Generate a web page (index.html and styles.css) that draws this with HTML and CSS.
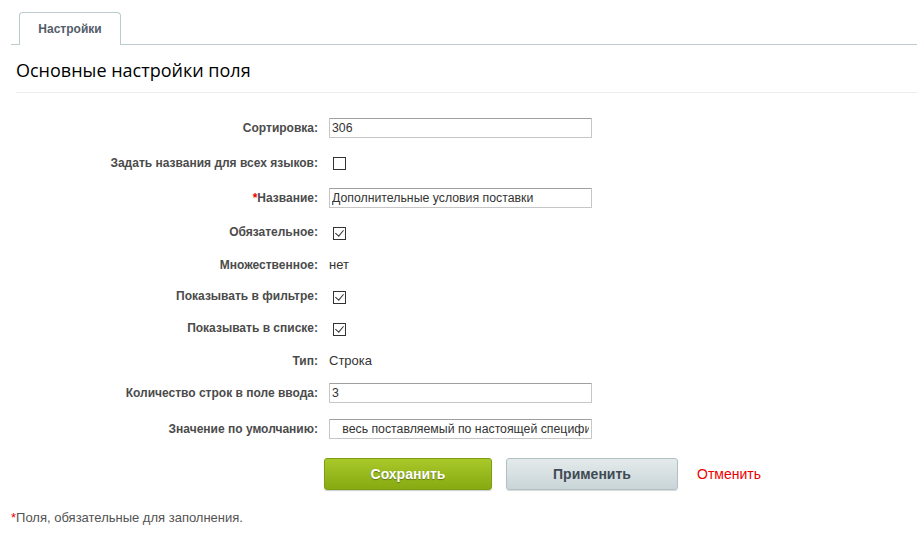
FILE: index.html
```html
<!DOCTYPE html>
<html lang="ru">
<head>
    <meta charset="UTF-8">
    <meta name="viewport" content="width=device-width, initial-scale=1.0">
    <title>Настройки поля</title>
    <link rel="stylesheet" href="styles.css">
</head>
<body>
    <div class="tabs">
        <span class="tab">Настройки</span>
    </div>

    <h2 class="title">Основные настройки поля</h2>

    <div class="form">
        <div class="row r1">
            <label class="lbl">Сортировка:</label>
            <div class="val"><input class="txt" type="text" value="306"></div>
        </div>
        <div class="row r2">
            <label class="lbl">Задать названия для всех языков:</label>
            <div class="val"><span class="chk"></span></div>
        </div>
        <div class="row r3">
            <label class="lbl"><span class="req">*</span>Название:</label>
            <div class="val"><input class="txt" type="text" value="Дополнительные условия поставки"></div>
        </div>
        <div class="row r4">
            <label class="lbl">Обязательное:</label>
            <div class="val"><span class="chk on"></span></div>
        </div>
        <div class="row r5">
            <label class="lbl">Множественное:</label>
            <div class="val">нет</div>
        </div>
        <div class="row r6">
            <label class="lbl">Показывать в фильтре:</label>
            <div class="val"><span class="chk on"></span></div>
        </div>
        <div class="row r7">
            <label class="lbl">Показывать в списке:</label>
            <div class="val"><span class="chk on"></span></div>
        </div>
        <div class="row r8">
            <label class="lbl">Тип:</label>
            <div class="val">Строка</div>
        </div>
        <div class="row r9">
            <label class="lbl">Количество строк в поле ввода:</label>
            <div class="val"><input class="txt" type="text" value="3"></div>
        </div>
        <div class="row r10">
            <label class="lbl">Значение по умолчанию:</label>
            <div class="val"><input class="txt" type="text" value="   весь поставляемый по настоящей спецификации"></div>
        </div>
    </div>

    <div class="buttons">
        <button class="btn btn-save">Сохранить</button>
        <button class="btn btn-apply">Применить</button>
        <a class="cancel" href="#">Отменить</a>
    </div>

    <p class="note"><span class="req">*</span>Поля, обязательные для заполнения.</p>
</body>
</html>
```

FILE: styles.css
```css
body {
    margin: 0;
    padding: 12px 0 0 11px;
    font-family: "Liberation Sans", Arial, sans-serif;
    font-size: 12px;
    color: #333;
    background: #fff;
}

/* вкладки */
.tabs {
    height: 32px;
    border-bottom: 1px solid #bccbcd;
}

.tab {
    display: inline-block;
    box-sizing: border-box;
    margin-left: 8px;
    width: 102px;
    height: 33px;
    padding-top: 9px;
    text-align: center;
    font-weight: bold;
    color: #535c69;
    background: #fff;
    border: 1px solid #bccbcd;
    border-bottom: none;
    border-radius: 4px 4px 0 0;
}

.title {
    margin: 0 0 0 5px;
    padding: 13px 0 10px;
    font-family: "Open Sans", "Noto Sans", sans-serif;
    font-size: 18px;
    font-weight: normal;
    color: #000;
    border-bottom: 1px solid #eee;
}

/* форма */
.form {
    display: grid;
    grid-template-rows: 34px 35px 35px 34px 31px 32px 32px 33px 31px 42px;
    margin-top: 18px;
}

.row {
    display: grid;
    grid-template-columns: 307px 1fr;
    column-gap: 11px;
    align-items: center;
}

.lbl {
    text-align: right;
    font-weight: bold;
    color: #4b4b4b;
}

.req {color: #e00;}

.val {
    font-size: 13px;
    color: #333;
}

.txt {
    box-sizing: border-box;
    width: 263px;
    height: 20px;
    margin: 0;
    padding: 0 2px;
    font-family: "Liberation Sans", Arial, sans-serif;
    font-size: 12.3px;
    color: #333;
    border: 1px solid #c6c6c6;
    border-top-color: #9f9f9f;
    border-radius: 1px;
    outline: none;
}

.chk {
    display: inline-block;
    position: relative;
    box-sizing: border-box;
    width: 13px;
    height: 13px;
    margin-left: 4px;
    border: 1px solid #333;
    vertical-align: middle;
}

/* галочка */
.chk.on::after {
    content: "";
    position: absolute;
    left: 3px;
    top: 0;
    width: 4px;
    height: 7px;
    border: solid #333;
    border-width: 0 1px 1px 0;
    transform: rotate(40deg);
}

/* кнопки */
.buttons {
    display: flex;
    align-items: center;
    margin: 8px 0 0 313px;
}

.btn {
    box-sizing: border-box;
    height: 32px;
    padding: 0;
    font-family: "Liberation Sans", Arial, sans-serif;
    font-size: 14px;
    font-weight: bold;
    border-radius: 3px;
    cursor: pointer;
}

.btn-save {
    width: 168px;
    color: #fff;
    text-shadow: 0 1px 1px rgba(0, 0, 0, 0.35);
    background: linear-gradient(#a9c82a, #86aa11);
    border: 1px solid #7d9e12;
    box-shadow: 0 1px 1px rgba(0, 0, 0, 0.2);
}

.btn-apply {
    width: 172px;
    margin-left: 14px;
    color: #3f4b54;
    background: linear-gradient(#e4eaeb, #c9d5d8);
    border: 1px solid #b3c0c3;
    box-shadow: 0 1px 1px rgba(0, 0, 0, 0.15);
}

.cancel {
    margin-left: 19px;
    font-size: 14px;
    color: #e00;
    text-decoration: none;
}

.note {
    margin: 20px 0 0;
    font-size: 13px;
    color: #535353;
}
```
